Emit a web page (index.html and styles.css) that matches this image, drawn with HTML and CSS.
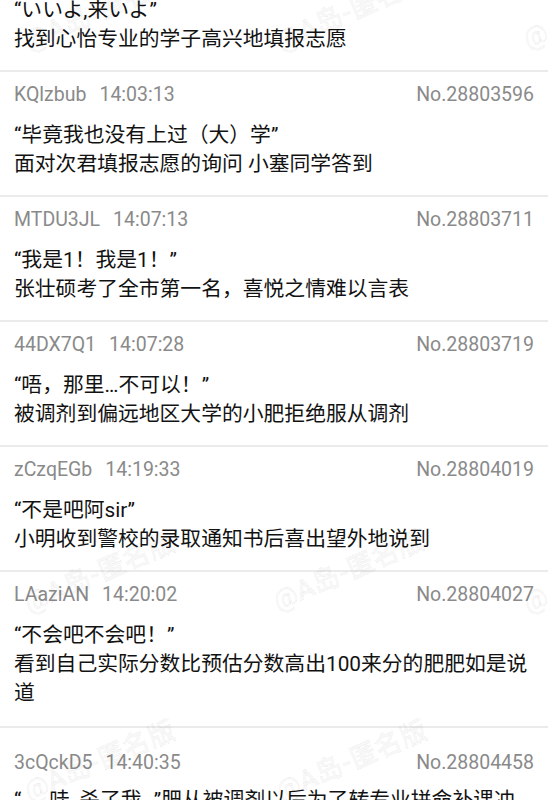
FILE: index.html
```html
<!DOCTYPE html>
<html lang="zh-CN">
<head>
    <meta charset="UTF-8">
    <meta name="viewport" content="width=device-width, initial-scale=1.0">
    <title>A岛 - 串</title>
    <link rel="stylesheet" href="styles.css">
</head>
<body>
    <div class="page">
        <div class="thread">
            <div class="post">
                <div class="post-head">
                    <span class="uid">fT0eWqu</span>
                    <span class="time">13:58:40</span>
                    <span class="no">No.28803501</span>
                </div>
                <div class="post-body">“いいよ,来いよ”<br>找到心怡专业的学子高兴地填报志愿</div>
            </div>

            <div class="post">
                <div class="post-head">
                    <span class="uid">KQlzbub</span>
                    <span class="time">14:03:13</span>
                    <span class="no">No.28803596</span>
                </div>
                <div class="post-body">“毕竟我也没有上过（大）学”<br>面对次君填报志愿的询问 小塞同学答到</div>
            </div>

            <div class="post">
                <div class="post-head">
                    <span class="uid">MTDU3JL</span>
                    <span class="time">14:07:13</span>
                    <span class="no">No.28803711</span>
                </div>
                <div class="post-body">“我是1！我是1！”<br>张壮硕考了全市第一名，喜悦之情难以言表</div>
            </div>

            <div class="post">
                <div class="post-head">
                    <span class="uid">44DX7Q1</span>
                    <span class="time">14:07:28</span>
                    <span class="no">No.28803719</span>
                </div>
                <div class="post-body">“唔，那里…不可以！”<br>被调剂到偏远地区大学的小肥拒绝服从调剂</div>
            </div>

            <div class="post">
                <div class="post-head">
                    <span class="uid">zCzqEGb</span>
                    <span class="time">14:19:33</span>
                    <span class="no">No.28804019</span>
                </div>
                <div class="post-body">“不是吧阿sir”<br>小明收到警校的录取通知书后喜出望外地说到</div>
            </div>

            <div class="post post-tall">
                <div class="post-head">
                    <span class="uid">LAaziAN</span>
                    <span class="time">14:20:02</span>
                    <span class="no">No.28804027</span>
                </div>
                <div class="post-body">“不会吧不会吧！”<br>看到自己实际分数比预估分数高出100来分的肥肥如是说道</div>
            </div>

            <div class="post post-next">
                <div class="post-head">
                    <span class="uid">3cQckD5</span>
                    <span class="time">14:40:35</span>
                    <span class="no">No.28804458</span>
                </div>
                <div class="post-body">“……哇, 杀了我…”肥从被调剂以后为了转专业拼命补课冲刺，终于在期末考试中拿到了专业第一</div>
            </div>
        </div>

        <!-- image watermark -->
        <span class="watermark wm-1">@A岛-匿名版</span>
        <span class="watermark wm-2">@A岛-匿名版</span>
        <span class="watermark wm-3">@A岛-匿名版</span>
        <span class="watermark wm-4">@A岛-匿名版</span>
        <span class="watermark wm-5">@A岛-匿名版</span>
        <span class="watermark wm-6">@A岛-匿名版</span>
        <span class="watermark wm-7">@A岛-匿名版</span>
        <span class="watermark wm-8">@A岛-匿名版</span>
    </div>
</body>
</html>
```

FILE: styles.css
```css
:root {
    --text-color: #121212;
    --meta-color: #8a8a8a;
    --divider-color: #ebebeb;
    --background-color: #ffffff;
}

html, body {
    overflow: hidden;
}

body {
    font-family: Roboto, "Noto Sans CJK SC", sans-serif;
    margin: 0;
    padding: 0;
    background-color: var(--background-color);
    color: var(--text-color);
}

.page {
    position: relative;
    height: 800px;
    overflow: hidden;
}

.thread {
    margin-top: -53px;
}

.post {
    padding: 10px 14px 16px;
    border-bottom: 2px solid var(--divider-color);
}

.post-tall {
    padding-bottom: 18px;
}

.post-next {
    padding-top: 22px;
}

.post-head {
    display: flex;
    align-items: center;
    height: 24px;
    font-size: 19.5px;
    color: var(--meta-color);
    margin-bottom: 15px;
}

.post-next .post-head {
    margin-bottom: 12px;
}

.uid {
    margin-right: 13px;
}

.no {
    margin-left: auto;
}

.post-body {
    font-size: 20.8px;
    line-height: 29px;
}

.watermark {
    position: absolute;
    font-family: Roboto, "Noto Sans CJK SC", sans-serif;
    font-size: 27px;
    font-weight: 700;
    line-height: 27px;
    white-space: nowrap;
    color: rgba(0, 0, 0, 0.05);
    -webkit-text-stroke: 0.6px rgba(0, 0, 0, 0.05);
    transform: rotate(-23deg);
    transform-origin: 0 100%;
    pointer-events: none;
}

.wm-1 { left: 31px;  top: 28px; }
.wm-2 { left: 283px; top: 28px; }
.wm-3 { left: 530px; top: 26px; }
.wm-4 { left: 31px;  top: 590px; }
.wm-5 { left: 280px; top: 588px; }
.wm-6 { left: 530px; top: 590px; }
.wm-7 { left: 31px;  top: 778px; }
.wm-8 { left: 283px; top: 778px; }
```
